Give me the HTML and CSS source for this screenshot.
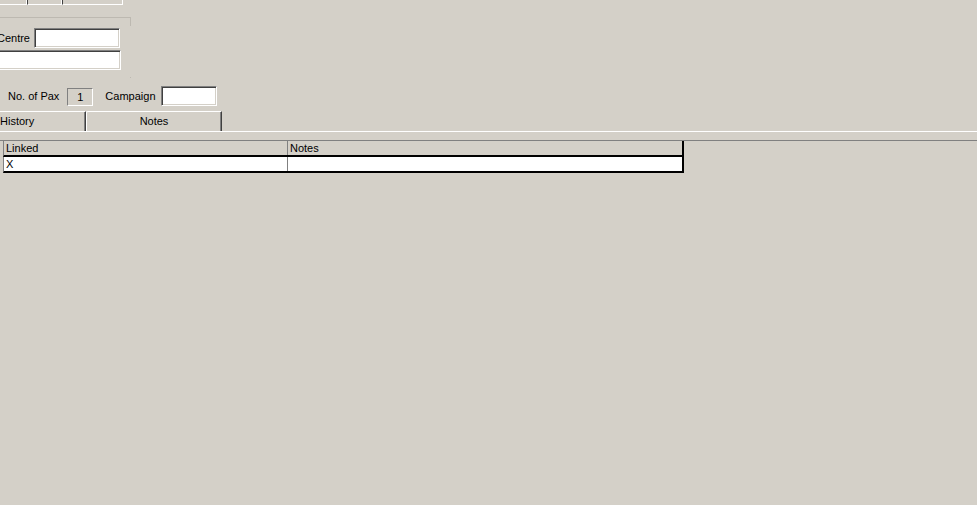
FILE: index.html
```html
<!DOCTYPE html>
<html lang="en">
<head>
  <meta charset="UTF-8" />
  <title>Booking</title>
  <link rel="stylesheet" href="styles.css">
</head>
<body>
<div class="form">
  <div class="top-row">
    <div class="cut-box first"></div>
    <div class="cut-box second"></div>
    <div class="cut-box third"></div>
  </div>

  <div class="group">
    <div class="field-row">
      <span class="label centre-label">Centre</span>
      <div class="input centre-input"></div>
    </div>
    <div class="field-row">
      <div class="input wide-input"></div>
    </div>
  </div>

  <div class="pax-row">
    <span class="label">No. of Pax</span>
    <div class="static-box">1</div>
    <span class="label">Campaign</span>
    <div class="input campaign-input"></div>
  </div>

  <div class="tabs">
    <div class="tab history-tab">History</div>
    <div class="tab notes-tab">Notes</div>
  </div>
  <div class="tab-panel">
    <div class="grid">
      <div class="grid-head">
        <div class="cell col-linked">Linked</div>
        <div class="cell col-notes">Notes</div>
      </div>
      <div class="grid-row">
        <div class="cell col-linked">X</div>
        <div class="cell col-notes"></div>
      </div>
    </div>
  </div>
</div>
</body>
</html>
```

FILE: styles.css
```css
body {
  margin: 0;
  background: #d4d0c8;
  font-family: "Liberation Sans", Arial, sans-serif;
  font-size: 11px;
  color: #000;
  overflow: hidden;
  height: 505px;
}

.form {
  display: flex;
  flex-direction: column;
}

/* clipped controls at the very top */
.top-row {
  display: flex;
  height: 5px;
}

.cut-box {
  height: 4px;
  border-bottom: 1px solid #fff;
  border-right: 1px solid #fff;
  border-left: 1px solid #404040;
}

.cut-box.first {
  width: 26px;
  border-left: none;
}

.cut-box.second {
  width: 33px;
}

.cut-box.third {
  width: 59px;
}

/* group box */
.group {
  position: relative;
  box-sizing: border-box;
  width: 131px;
  height: 61px;
  margin-top: 12px;
  border-top: 1px solid #bdb9b1;
  padding-top: 10px;
  display: flex;
  flex-direction: column;
  gap: 2px;
}

.group::after {
  content: "";
  position: absolute;
  right: 0;
  top: -1px;
  width: 1px;
  height: 9px;
  background: #bdb9b1;
}

.group::before {
  content: "";
  position: absolute;
  right: 0;
  bottom: 0;
  width: 1px;
  height: 1px;
  background: #bdb9b1;
}

.field-row {
  display: flex;
  align-items: center;
  height: 20px;
}

.label {
  white-space: nowrap;
}

.centre-label {
  box-sizing: border-box;
  margin-left: -8px;
  width: 42px;
  padding-right: 4px;
  text-align: right;
}

.input {
  box-sizing: border-box;
  height: 20px;
  background: #fff;
  border: 1px solid;
  border-color: #808080 #fff #fff #808080;
  box-shadow: inset 1px 1px #404040, inset -1px -1px #d4d0c8;
}

.centre-input {
  width: 86px;
}

.wide-input {
  width: 123px;
  margin-left: -2px;
}

/* pax row */
.pax-row {
  display: flex;
  align-items: center;
  height: 20px;
  margin-top: 8px;
  padding-left: 8px;
}

.static-box {
  box-sizing: border-box;
  width: 26px;
  height: 18px;
  margin: 2px 12px 0 8px;
  border: 1px solid;
  border-color: #808080 #fff #fff #808080;
  text-align: center;
  line-height: 16px;
}

.campaign-input {
  width: 56px;
  margin-left: 5px;
}

/* tabs */
.tabs {
  display: flex;
  height: 20px;
  margin-top: 5px;
}

.tab {
  box-sizing: border-box;
  height: 20px;
  border-top: 1px solid #fff;
  border-right: 1px solid #404040;
  box-shadow: inset -1px 0 #808080;
  line-height: 19px;
}

.history-tab {
  width: 86px;
}

.notes-tab {
  width: 136px;
  border-left: 1px solid #fff;
  text-align: center;
  border-top-left-radius: 2px;
}

.tab-panel {
  border-top: 1px solid #fff;
  padding-top: 8px;
}

/* grid */
.grid {
  border-top: 1px solid #808080;
}

.grid-head,
.grid-row {
  display: flex;
  box-sizing: border-box;
  width: 681px;
  margin-left: 3px;
  border-left: 1px solid #808080;
  border-right: 2px solid #000;
  border-bottom: 2px solid #000;
}

.grid-head {
  height: 16px;
}

.grid-row {
  height: 16px;
  background: #fff;
}

.cell {
  box-sizing: border-box;
  height: 14px;
  line-height: 14px;
  padding-left: 2px;
}

.col-linked {
  width: 284px;
  border-right: 1px solid #808080;
}

.col-notes {
  flex: 1;
}
```
